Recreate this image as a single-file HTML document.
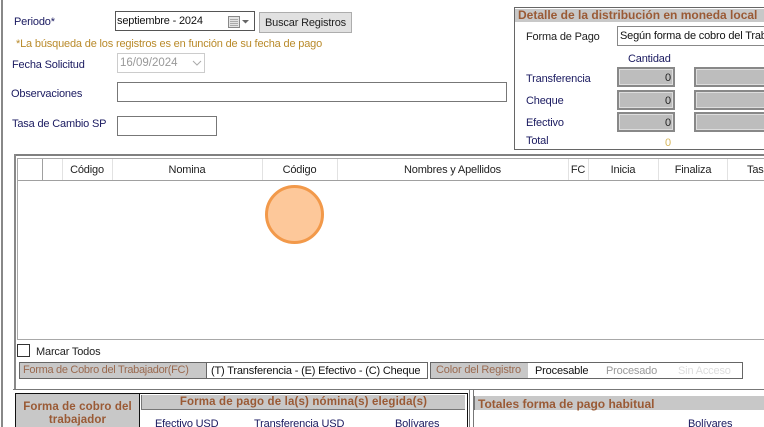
<!DOCTYPE html>
<html><head><meta charset="utf-8"><style>
html,body{margin:0;padding:0;background:#fff}
#p{position:relative;width:764px;height:427px;overflow:hidden;background:#fff;font:11px "Liberation Sans",sans-serif;letter-spacing:-.17px;color:#1a1a60}
#p div{position:absolute;box-sizing:border-box;white-space:nowrap}
.t{line-height:14px;height:14px}
.k{color:#111}
.box{background:#fff;border:1px solid #777}
.g{background:#bdbdbd;border:2px solid #888;outline:1px solid #ddd;outline-offset:-3px;color:#222;text-align:right;padding-right:2px;line-height:18px}
.h{font-weight:bold;color:#9a5a35;background:#c8c8c8;font-size:12px;line-height:14px;letter-spacing:0}
.c{color:#222;text-align:center;line-height:14px;top:163px;height:14px}
.v{top:159px;width:1px;height:21px;background:#e2e2e2}
</style></head><body><div id="p">
<div style="left:1px;top:0;width:2px;height:427px;background:#888"></div>

<div class="t" style="left:14px;top:15px">Periodo*</div>
<div class="box k" style="left:115px;top:11px;width:140px;height:20px;border-color:#555;padding-left:1px;line-height:19px">septiembre - 2024</div>
<svg style="position:absolute;left:228px;top:15px" width="24" height="13"><rect x="0.5" y="1.500" width="11" height="11" fill="#e4e4e4" stroke="#888"/><path d="M2 4.500h8M2 6.500h8M2 8.500h8M2 10.500h8" stroke="#aaa"/><path d="M14 5h7l-3.500 3.500z" fill="#666"/></svg>
<div style="left:259px;top:12px;width:93px;height:21px;background:#e1e1e1;border:1px solid #adadad;text-align:center;line-height:21px;color:#222">Buscar Registros</div>
<div class="t" style="left:16px;top:37px;color:#b98a2a">*La búsqueda de los registros es en función de su fecha de pago</div>

<div class="t" style="left:12px;top:58px">Fecha Solicitud</div>
<div style="left:117px;top:53px;width:88px;height:20px;border:1px solid #ccc;color:#999;line-height:19px;padding-left:2px;font-size:11.500px;letter-spacing:0">16/09/2024</div>
<svg style="position:absolute;left:192px;top:60px" width="10" height="7"><path d="M1 1l4 4 4-4" fill="none" stroke="#aaa"/></svg>

<div class="t" style="left:11px;top:87px">Observaciones</div>
<div class="box" style="left:117px;top:82px;width:390px;height:20px"></div>
<div class="t" style="left:12px;top:117px">Tasa de Cambio SP</div>
<div class="box" style="left:117px;top:116px;width:100px;height:20px"></div>

<div style="left:514px;top:7px;width:260px;height:143px;border:1px solid #666;background:#fff"></div>
<div class="h" style="left:515px;top:9px;width:249px;height:13px;padding-left:3px;line-height:13px">Detalle de la distribución en moneda local</div>
<div class="t" style="left:526px;top:30px;color:#222">Forma de Pago</div>
<div class="box k" style="left:617px;top:26px;width:160px;height:20px;line-height:19px;padding-left:2px;border-color:#888">Según forma de cobro del Trabajador</div>
<div class="t" style="left:628px;top:52px">Cantidad</div>
<div class="t" style="left:526px;top:72px">Transferencia</div>
<div class="t" style="left:526px;top:94px">Cheque</div>
<div class="t" style="left:526px;top:116px">Efectivo</div>
<div class="t" style="left:526px;top:134px">Total</div>
<div class="g" style="left:617px;top:67px;width:58px;height:20px">0</div>
<div class="g" style="left:617px;top:90px;width:58px;height:20px">0</div>
<div class="g" style="left:617px;top:112px;width:58px;height:20px">0</div>
<div class="g" style="left:694px;top:67px;width:80px;height:20px"></div>
<div class="g" style="left:694px;top:90px;width:80px;height:20px"></div>
<div class="g" style="left:694px;top:112px;width:80px;height:20px"></div>
<div class="t" style="left:665px;top:136px;color:#d6b65a">0</div>

<div style="left:15px;top:154px;width:749px;height:2px;background:#808080"></div>
<div style="left:14px;top:154px;width:2px;height:235px;background:#888"></div>
<div style="left:17px;top:158px;width:760px;height:182px;border:1px solid #a8a8a8;background:#fff"></div>
<div style="left:18px;top:180px;width:746px;height:1px;background:#a0a0a0"></div>
<div style="left:42px;top:159px;width:1px;height:21px;background:#a0a0a0"></div>
<div class="v" style="left:62px"></div><div class="v" style="left:112px"></div><div class="v" style="left:262px"></div><div class="v" style="left:337px"></div><div class="v" style="left:568px"></div><div class="v" style="left:588px"></div><div class="v" style="left:658px"></div><div class="v" style="left:727px"></div>
<div class="c" style="left:62px;width:50px">Código</div>
<div class="c" style="left:112px;width:150px">Nomina</div>
<div class="c" style="left:262px;width:75px">Código</div>
<div class="c" style="left:337px;width:231px">Nombres y Apellidos</div>
<div class="c" style="left:568px;width:20px">FC</div>
<div class="c" style="left:588px;width:70px">Inicia</div>
<div class="c" style="left:658px;width:70px">Finaliza</div>
<div class="c" style="left:747px;width:40px;text-align:left">Tasa</div>

<div style="left:265px;top:185px;width:59px;height:59px;border-radius:50%;background:#fdc89a;border:3px solid #f2994a"></div>

<div style="left:17px;top:344px;width:13px;height:13px;border:1px solid #333;background:#fff"></div>
<div class="t k" style="left:36px;top:345px;color:#222">Marcar Todos</div>

<div style="left:19px;top:362px;width:409px;height:17px;border:1px solid #666;background:#fff"></div>
<div style="left:20px;top:363px;width:187px;height:15px;background:#c8c8c8;color:#9a6a50;line-height:15px;padding-left:3px;border-right:1px solid #666;letter-spacing:-.3px">Forma de Cobro del Trabajador(FC)</div>
<div class="t k" style="left:211px;top:364px">(T) Transferencia - (E) Efectivo - (C) Cheque</div>
<div style="left:430px;top:362px;width:313px;height:17px;border:1px solid #666;background:#fff"></div>
<div style="left:431px;top:363px;width:97px;height:15px;background:#c8c8c8;color:#9a6a50;line-height:15px;padding-left:5px">Color del Registro</div>
<div class="t k" style="left:535px;top:364px">Procesable</div>
<div class="t" style="left:606px;top:364px;color:#999">Procesado</div>
<div class="t" style="left:678px;top:364px;color:#ddd">Sin Acceso</div>

<div style="left:13px;top:389px;width:751px;height:1px;background:#777"></div>
<div style="left:15px;top:393px;width:453px;height:40px;border:1px solid #111;background:#fff"></div>
<div class="h" style="left:16px;top:394px;width:124px;height:40px;border-right:1px solid #111;text-align:center;padding-top:7px;line-height:13px;white-space:normal;letter-spacing:.1px;font-size:11.500px">Forma de cobro del<br>trabajador</div>
<div class="h" style="left:141px;top:395px;width:324px;height:15px;text-align:center;border-left:1px solid #777;border-bottom:1px solid #777;letter-spacing:.15px;font-size:11.500px;line-height:15px">Forma de pago de la(s) nómina(s) elegida(s)</div>
<div class="t" style="left:155px;top:417px">Efectivo USD</div>
<div class="t" style="left:254px;top:417px">Transferencia USD</div>
<div class="t" style="left:395px;top:417px">Bolívares</div>
<div style="left:469px;top:390px;width:1px;height:37px;background:#777"></div>
<div style="left:473px;top:390px;width:1px;height:37px;background:#777"></div>
<div class="h" style="left:474px;top:396px;width:290px;height:14px;padding-left:3px;border-left:1px solid #777;line-height:16px">Totales forma de pago habitual</div>
<div class="t" style="left:688px;top:417px">Bolívares</div>
</div></body></html>
